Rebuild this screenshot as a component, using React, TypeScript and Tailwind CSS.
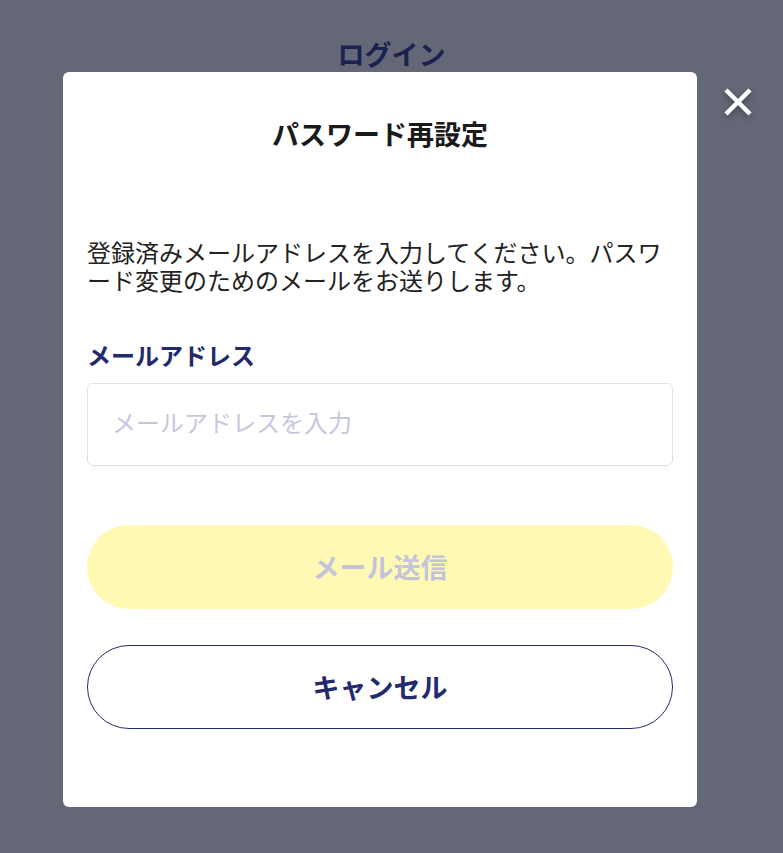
import React from "react";

export default function App() {
  return (
    <div className="relative h-[853px] w-full overflow-hidden bg-[#646876] font-['Noto_Sans_CJK_JP','Noto_Sans',sans-serif]">
      {/* underlying page (dimmed) */}
      <div className="flex flex-col items-center pt-[34px]">
        <h1 className="text-[27px] font-bold leading-[40px] text-[#1b2150]">ログイン</h1>
      </div>

      {/* close button */}
      <button
        type="button"
        aria-label="閉じる"
        className="absolute left-[722px] top-[86px] h-[32px] w-[32px] drop-shadow-[0_3px_3px_rgba(0,0,0,0.35)]"
      >
        <svg viewBox="0 0 32 32" className="h-full w-full">
          <path d="M4 4 L28 28 M28 4 L4 28" stroke="#ffffff" strokeWidth="4.5" strokeLinecap="butt" />
        </svg>
      </button>

      {/* modal */}
      <div className="absolute left-[63px] top-[72px] flex h-[735px] w-[634px] flex-col rounded-[6px] bg-white px-6 pt-[42px]">
        <h2 className="text-center text-[27px] font-bold leading-[40px] text-[#1a1a1a]">パスワード再設定</h2>
        <p className="mt-[84px] text-[24px] leading-[28px] text-[#222222]">
          登録済みメールアドレスを入力してください。パスワード変更のためのメールをお送りします。
        </p>
        <label className="mt-[45px] text-[24px] font-bold leading-[32px] text-[#222a6c]">メールアドレス</label>
        <input
          type="email"
          placeholder="メールアドレスを入力"
          className="mt-[12px] h-[83px] w-full rounded-[6px] border border-[#e2e2e6] pb-[6px] pl-6 pr-6 text-[24px] text-[#222222] outline-none placeholder:text-[#c5c7dd]"
        />
        <button
          type="button"
          disabled
          className="mt-[59px] h-[84px] w-full rounded-full bg-[#fff9b4] text-[27px] font-bold text-[#c3c4dc]"
        >
          メール送信
        </button>
        <button
          type="button"
          className="mt-[36px] h-[84px] w-full rounded-full border border-[#232a6e] bg-white text-[27px] font-bold text-[#232a6e]"
        >
          キャンセル
        </button>
      </div>
    </div>
  );
}
